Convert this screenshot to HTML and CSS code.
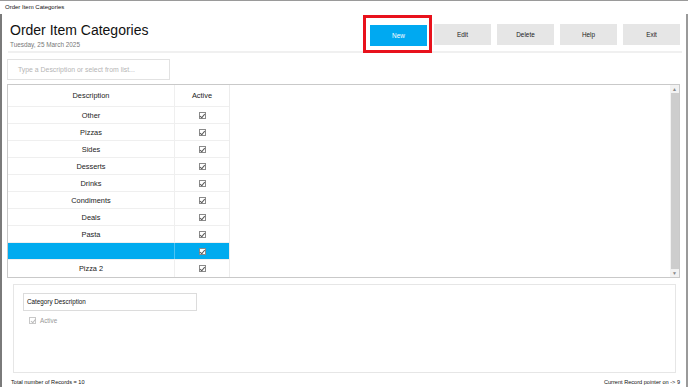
FILE: index.html
```html
<!DOCTYPE html>
<html lang="en">
<head>
    <meta charset="UTF-8">
    <title>Order Item Categories</title>
    <link rel="stylesheet" href="styles.css">
</head>
<body>

    <div class="titlebar">Order Item Categories</div>

    <div class="frame">

        <!-- Cabecalho com titulo e botoes -->
        <div class="header">
            <div class="heading">
                <h1>Order Item Categories</h1>
                <div class="date">Tuesday, 25 March 2025</div>
            </div>
            <div class="buttons">
                <div class="new-wrap">
                    <button class="btn btn-new">New</button>
                    <span class="highlight"></span>
                </div>
                <button class="btn">Edit</button>
                <button class="btn">Delete</button>
                <button class="btn">Help</button>
                <button class="btn">Exit</button>
            </div>
        </div>
        <div class="separator"></div>

        <div class="main">
            <div class="search">Type a Description or select from list...</div>

            <!-- Grade de categorias -->
            <div class="grid">
                <div class="table">
                    <div class="row head">
                        <div class="cell desc">Description</div>
                        <div class="cell act">Active</div>
                    </div>
                    <div class="row"><div class="cell desc">Other</div><div class="cell act"><span class="chk"></span></div></div>
                    <div class="row"><div class="cell desc">Pizzas</div><div class="cell act"><span class="chk"></span></div></div>
                    <div class="row"><div class="cell desc">Sides</div><div class="cell act"><span class="chk"></span></div></div>
                    <div class="row"><div class="cell desc">Desserts</div><div class="cell act"><span class="chk"></span></div></div>
                    <div class="row"><div class="cell desc">Drinks</div><div class="cell act"><span class="chk"></span></div></div>
                    <div class="row"><div class="cell desc">Condiments</div><div class="cell act"><span class="chk"></span></div></div>
                    <div class="row"><div class="cell desc">Deals</div><div class="cell act"><span class="chk"></span></div></div>
                    <div class="row"><div class="cell desc">Pasta</div><div class="cell act"><span class="chk"></span></div></div>
                    <div class="row selected"><div class="cell desc"></div><div class="cell act"><span class="chk"></span></div></div>
                    <div class="row"><div class="cell desc">Pizza 2</div><div class="cell act"><span class="chk"></span></div></div>
                </div>
                <div class="scrollbar">
                    <span class="arrow">&#9650;</span>
                    <span class="thumb"></span>
                    <span class="arrow">&#9660;</span>
                </div>
            </div>

            <!-- Painel de edicao -->
            <div class="panel">
                <div class="field">Category Description</div>
                <div class="check-line"><span class="chk disabled"></span>Active</div>
            </div>
        </div>

        <div class="footer">
            <span>Total number of Records = 10</span>
            <span>Current Record pointer on -&gt; 9</span>
        </div>
    </div>

</body>
</html>
```

FILE: styles.css
```css
* {
    box-sizing: border-box;
}

/* Pagina */
body {
    margin: 0;
    background: #fff;
    font-family: "Liberation Sans", Arial, sans-serif;
    color: #222;
    width: 688px;
    height: 387px;
    overflow: hidden;
}

/* Barra de titulo da janela */
.titlebar {
    height: 14px;
    border-top: 1px solid #9a9a9a;
    font-size: 6px;
    line-height: 13px;
    padding-left: 5px;
    color: #111;
}

.frame {
    height: 373px;
    border-left: 2px solid #7a7a7a;
    border-right: 2px solid #9a9a9a;
    display: flex;
    flex-direction: column;
}

/* Cabecalho */
.header {
    display: flex;
    justify-content: space-between;
    padding: 0 6px 0 8px;
    height: 37px;
    flex-shrink: 0;
}

.heading h1 {
    margin: 8px 0 0;
    font-size: 14px;
    line-height: 17px;
    font-weight: normal;
    color: #111;
}

.date {
    margin-top: 2px;
    font-size: 6.4px;
    line-height: 8px;
    color: #777;
}

.buttons {
    display: flex;
    gap: 6px;
    padding-top: 10px;
}

.btn {
    width: 57px;
    height: 21px;
    border: none;
    padding: 0;
    background: #e6e6e6;
    font-family: "Liberation Sans", Arial, sans-serif;
    font-size: 6.4px;
    color: #222;
}

.new-wrap {
    position: relative;
    margin-right: 1px;
}

.btn-new {
    background: #00a9f1;
    color: #fff;
}

/* Marcacao vermelha sobre o botao New */
.highlight {
    position: absolute;
    left: -7px;
    top: -9px;
    width: 69px;
    height: 38px;
    border: 3px solid #e8121c;
}

.separator {
    height: 2px;
    flex-shrink: 0;
    background: #f0f0f0;
    margin: 0 4px 0 6px;
}

/* Area principal */
.main {
    padding: 6px 6px 0 5px;
    flex: 1;
    display: flex;
    flex-direction: column;
}

.search {
    width: 163px;
    height: 21px;
    border: 1px solid #e2e2e2;
    padding-left: 10px;
    font-size: 6.9px;
    line-height: 19px;
    color: #b5b5b5;
}

.grid {
    margin-top: 4px;
    height: 194px;
    border: 1px solid #c9c9c9;
    display: flex;
    justify-content: space-between;
}

.table {
    width: 222px;
    border-right: 1px solid #ececec;
}

.row {
    display: flex;
    height: 17px;
    border-bottom: 1px solid #efefef;
}

.row.head {
    height: 22px;
}

.row:last-child {
    border-bottom: none;
}

.cell {
    display: flex;
    align-items: center;
    justify-content: center;
    font-size: 7.4px;
    color: #222;
}

.desc {
    width: 167px;
    border-right: 1px solid #efefef;
}

.act {
    flex: 1;
}

.row.selected {
    background: #00abef;
}

.row.selected .desc {
    border-right-color: #4cc4f4;
}

/* Caixinha de selecao */
.chk {
    width: 7px;
    height: 7px;
    border: 1px solid #8a8a8a;
    background: #fff;
    position: relative;
}

.chk::after {
    content: "";
    position: absolute;
    left: 1.5px;
    top: 0;
    width: 2px;
    height: 3.5px;
    border-right: 1px solid #555;
    border-bottom: 1px solid #555;
    transform: rotate(40deg);
}

.chk.disabled {
    border-color: #c8c8c8;
    margin-right: 4px;
}

.chk.disabled::after {
    border-color: #bbb;
}

/* Barra de rolagem */
.scrollbar {
    width: 9px;
    display: flex;
    flex-direction: column;
    align-items: center;
    background: #f2f2f2;
}

.arrow {
    font-size: 5px;
    line-height: 8px;
    height: 8px;
    color: #888;
}

.thumb {
    flex: 1;
    width: 8px;
    background: #cdcdcd;
}

/* Painel inferior */
.panel {
    margin: 6px 4px 0 6px;
    height: 89px;
    border: 1px solid #e6e6e6;
    padding: 8px 0 0 9px;
}

.field {
    width: 174px;
    height: 18px;
    border: 1px solid #dcdcdc;
    padding-left: 3px;
    font-size: 6.3px;
    line-height: 16px;
    color: #111;
}

.check-line {
    display: flex;
    align-items: center;
    margin: 6px 0 0 6px;
    font-size: 6.3px;
    color: #999;
}

.footer {
    display: flex;
    justify-content: space-between;
    padding: 0 6px 0 9px;
    height: 14px;
    flex-shrink: 0;
    align-items: flex-end;
    font-size: 5.6px;
    line-height: 10px;
    color: #111;
}
```
